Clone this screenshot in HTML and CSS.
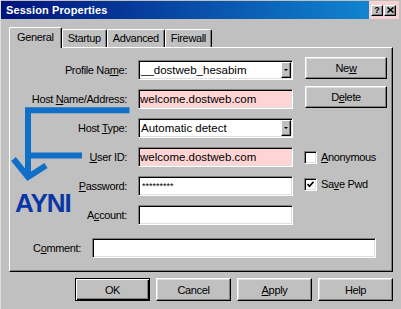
FILE: index.html
```html
<!DOCTYPE html>
<html lang="en">
<head>
    <meta charset="UTF-8">
    <title>Session Properties</title>
    <link rel="stylesheet" href="styles.css">
</head>
<body>

<div class="window">
    <!-- Title bar -->
    <div class="titlebar">
        <span class="title-text">Session Properties</span>
        <div class="caption">
            <span class="cap-btn">?</span>
            <span class="cap-btn">
                <svg width="7" height="6" viewBox="0 0 7 6"><path d="M0.5 0.5 L6.5 5.5 M6.5 0.5 L0.5 5.5" stroke="#000" stroke-width="1.6"/></svg>
            </span>
        </div>
    </div>

    <div class="dialog">
        <!-- Tabs -->
        <div class="tabs">
            <div class="tab active">General</div>
            <div class="tab">Startup</div>
            <div class="tab">Advanced</div>
            <div class="tab">Firewall</div>
        </div>

        <div class="panel">
            <div class="form-grid">
                <label>Profile Na<u>m</u>e:</label>
                <div class="select"><span class="select-text">__dostweb_hesabim</span><span class="drop"></span></div>
                <button class="btn side">Ne<u>w</u></button>

                <label>Host <u>N</u>ame/Address:</label>
                <input class="field pink" type="text" value="welcome.dostweb.com">
                <button class="btn side">D<u>e</u>lete</button>

                <label>Host <u>T</u>ype:</label>
                <div class="select"><span class="select-text">Automatic detect</span><span class="drop"></span></div>
                <span></span>

                <label><u>U</u>ser ID:</label>
                <input class="field pink" type="text" value="welcome.dostweb.com">
                <div class="check"><span class="box"></span><span><u>A</u>nonymous</span></div>

                <label><u>P</u>assword:</label>
                <input class="field secret" type="text" value="*********">
                <div class="check save"><span class="box">
                    <svg width="7" height="7" viewBox="0 0 7 7"><path d="M0.5 3 L2.5 5.2 L6.5 0.8" stroke="#000" stroke-width="1.7" fill="none"/></svg>
                </span><span>Sa<u>v</u>e Pwd</span></div>

                <label>A<u>c</u>count:</label>
                <input class="field" type="text" value="">
                <span></span>
            </div>

            <div class="comment-row">
                <label>C<u>o</u>mment:</label>
                <input class="field wide" type="text" value="">
            </div>
        </div>

        <!-- Dialog buttons -->
        <div class="actions">
            <button class="btn default">OK</button>
            <button class="btn">Cancel</button>
            <button class="btn"><u>A</u>pply</button>
            <button class="btn">Help</button>
        </div>
    </div>

    <!-- Annotation drawn over the dialog -->
    <div class="note">
        <svg class="arrow" width="140" height="90" viewBox="0 0 140 90">
            <path d="M129.5 10.3 H28 V76 M82 55.5 H28 M13.5 59 L28 77 L46 65.5" fill="none" stroke="#1070c8" stroke-width="6"/>
        </svg>
        <span class="ayni">AYNI</span>
    </div>
</div>

</body>
</html>
```

FILE: styles.css
```css
/* General styles */
body {
    margin: 0;
    background-color: #c0c0c0;
    font-family: "Liberation Sans", Arial, sans-serif;
    font-size: 11px;
    letter-spacing: -0.35px;
    color: #000;
}

.window {
    position: relative;
    width: 401px;
    height: 309px;
    box-sizing: border-box;
    padding: 1px 2px 0 1px;
    box-shadow: inset 1px 0 #dfdfdf;
    overflow: hidden;
}

/* Title bar */
.titlebar {
    display: flex;
    height: 18px;
}

.title-text {
    flex: 1;
    background: linear-gradient(to right, #00127c, #1084d0);
    color: white;
    font-weight: bold;
    font-size: 11px;
    letter-spacing: 0.1px;
    line-height: 18px;
    padding-left: 5px;
}

.caption {
    width: 30px;
    background-color: #f8d2d2;
    display: flex;
    align-items: center;
    gap: 1px;
    padding-left: 2px;
    box-sizing: border-box;
}

.cap-btn {
    width: 12px;
    height: 11px;
    box-sizing: border-box;
    background-color: #c0c0c0;
    border: 1px solid;
    border-color: #fff #000 #000 #fff;
    box-shadow: inset -1px -1px #808080;
    display: flex;
    align-items: center;
    justify-content: center;
    font-size: 9px;
    font-weight: bold;
    line-height: 9px;
    letter-spacing: 0;
}

/* Dialog body */
.dialog {
    padding: 8px 6px 0 8px;
}

.tabs {
    display: flex;
    align-items: flex-end;
    height: 20px;
}

.tab {
    height: 18px;
    box-sizing: border-box;
    padding: 0 5px;
    line-height: 16px;
    border-top: 1px solid #fff;
    border-left: 1px solid #fff;
    border-right: 1px solid #000;
    border-radius: 2px 2px 0 0;
    box-shadow: inset -1px 0 #808080;
    background-color: #c0c0c0;
}

.tab.active {
    position: relative;
    z-index: 1;
    height: 21px;
    margin-bottom: -1px;
    padding: 0 7px;
    line-height: 18px;
}

.panel {
    border-top: 1px solid #fff;
    border-left: 1px solid #fff;
    border-right: 1px solid #000;
    border-bottom: 1px solid #000;
    box-shadow: inset -1px -1px #808080;
    padding: 12px 0 13px 0;
}

.form-grid {
    display: grid;
    grid-template-columns: 117px 155px 84px;
    grid-auto-rows: 20px;
    column-gap: 11px;
    row-gap: 9px;
}

.form-grid label,
.comment-row label {
    align-self: center;
    text-align: right;
    white-space: nowrap;
}

/* Sunken fields */
.field,
.select {
    box-sizing: border-box;
    width: 155px;
    height: 20px;
    margin: 0;
    padding: 0 0 0 1px;
    border: 1px solid;
    border-color: #808080 #fff #fff #808080;
    box-shadow: inset 1px 1px #000, inset -1px -1px #dfdfdf;
    background-color: white;
    font: 11.5px "Liberation Sans", Arial, sans-serif;
    letter-spacing: 0;
    color: #000;
    outline: none;
}

.field.pink {
    background-color: #ffd4d4;
}

.field.secret {
    font-size: 9px;
    padding-left: 3px;
}

.field.wide {
    width: 284px;
}

.select {
    display: flex;
    align-items: center;
    padding-right: 1px;
}

.select-text {
    flex: 1;
    padding-left: 1px;
}

.drop {
    width: 10px;
    height: 16px;
    box-sizing: border-box;
    background-color: #c0c0c0;
    border: 1px solid;
    border-color: #fff #000 #000 #fff;
    box-shadow: inset -1px -1px #808080;
    display: flex;
    align-items: center;
    justify-content: center;
}

.drop::after {
    content: "";
    border-left: 2px solid transparent;
    border-right: 2px solid transparent;
    border-top: 2px solid #000;
}

/* Buttons */
.btn {
    width: 75px;
    height: 23px;
    padding: 0;
    font: inherit;
    letter-spacing: inherit;
    color: #000;
    background-color: #c0c0c0;
    border: 1px solid;
    border-color: #fff #000 #000 #fff;
    box-shadow: inset -1px -1px #808080, inset 1px 1px #dfdfdf;
}

.btn.default {
    border-color: #000;
    box-shadow: inset 1px 1px #fff, inset -1px -1px #000, inset -2px -2px #808080;
}

.btn.side {
    width: 82px;
    height: 22px;
    margin-left: 1px;
    margin-top: -3px;
}

/* Checkboxes */
.check {
    display: flex;
    align-items: center;
    gap: 4px;
}

.check.save {
    margin-top: -4px;
}

.box {
    width: 13px;
    height: 13px;
    box-sizing: border-box;
    background-color: white;
    border: 1px solid;
    border-color: #808080 #fff #fff #808080;
    box-shadow: inset 1px 1px #000, inset -1px -1px #dfdfdf;
    display: flex;
    align-items: center;
    justify-content: center;
}

.comment-row {
    display: flex;
    gap: 11px;
    margin-top: 13px;
}

.comment-row label {
    width: 71px;
}

.actions {
    display: flex;
    justify-content: flex-end;
    gap: 6px;
    margin-top: 6px;
}

/* Blue annotation */
.note {
    position: absolute;
    left: 0;
    top: 100px;
    width: 140px;
    height: 115px;
    pointer-events: none;
}

.arrow {
    display: block;
}

.ayni {
    position: absolute;
    left: 15px;
    top: 90px;
    font-size: 26px;
    line-height: 26px;
    font-weight: bold;
    letter-spacing: -1px;
    color: #0a36a6;
}
```
